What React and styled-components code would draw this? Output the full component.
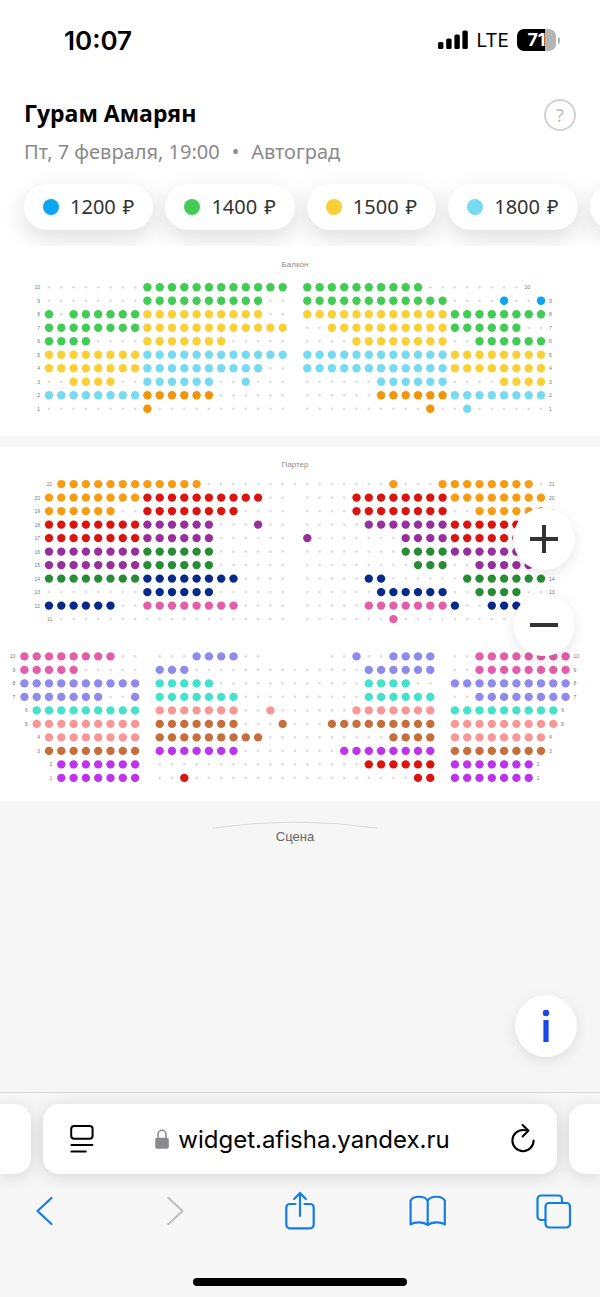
import React, { useState } from 'react';
import styled, { createGlobalStyle } from 'styled-components'

const COLORS = {
  b: '#0ba5f2',
  g: '#43cc55',
  y: '#f9d038',
  c: '#76dbf0',
  o: '#f39509',
  O: '#f89c14',
  r: '#dc1410',
  p: '#97309c',
  G: '#288c35',
  n: '#06298a',
  k: '#e35da8',
  l: '#8f8aeb',
  t: '#43e2cb',
  s: '#f99696',
  w: '#c66f3d',
  v: '#bd33ee',
}

const PRICES = [
  { price: 1200, color: COLORS.b },
  { price: 1400, color: COLORS.g },
  { price: 1500, color: COLORS.y },
  { price: 1800, color: COLORS.c },
  { price: 2000, color: COLORS.o },
]

// Each run is a count and a kind: a colour key, "." for a sold seat, "_" for an aisle
const BALCONY = [
  { row: 10, start: 2, seats: '8. 12g 1_ 10g 8.' },
  { row: 9, start: 2, seats: '8. 10g 2. 1_ 12g 4. 1b 2. 1b' },
  { row: 8, start: 2, seats: '1g 1. 6g 10y 2. 1_ 12y 8g' },
  { row: 7, start: 2, seats: '8g 12y 1_ 2. 10y 6g 2.' },
  { row: 6, start: 2, seats: '4g 4. 7y 5. 1_ 4. 8y 2. 6g' },
  { row: 5, start: 2, seats: '8y 12c 1_ 12c 8y' },
  { row: 4, start: 2, seats: '8y 10c 2. 1_ 12c 8y' },
  { row: 3, start: 2, seats: '2. 4y 2. 6c 2. 1c 3. 1_ 6. 6c 4. 4y' },
  { row: 2, start: 2, seats: '8c 6o 6. 1_ 6. 6o 8c' },
  { row: 1, start: 2, seats: '8. 1o 11. 1_ 10. 1o 2. 1c 6.' },
]

const PARTERRE_BACK = [
  { row: 21, start: 3, seats: '12O 15. 1O 3. 8O 1.' },
  { row: 20, start: 2, seats: '8O 10r 2. 1_ 4. 8r 8O' },
  { row: 19, start: 2, seats: '6O 2. 8r 4. 1_ 4. 8r 2. 6O' },
  { row: 18, start: 2, seats: '8r 6p 3. 1p 2. 1_ 5. 7p 8r' },
  { row: 17, start: 2, seats: '8r 6p 6. 1_ 1p 7. 4p 8r' },
  { row: 16, start: 2, seats: '8p 6G 6. 1_ 8. 4G 8p' },
  { row: 15, start: 2, seats: '8p 6G 6. 1_ 9. 3G 2. 6p' },
  { row: 14, start: 2, seats: '8G 8n 4. 1_ 5. 2n 5. 1. 7G' },
  { row: 13, start: 2, seats: '8. 6n 6. 1_ 6. 6n 2. 4G 2.' },
  { row: 12, start: 2, seats: '6n 2. 8k 4. 1_ 5. 7k 1n 2. 3n 2.' },
  { row: 11, start: 3, seats: '19. 1_ 7. 1k 11.' },
]

const PARTERRE_FRONT = [
  { row: 10, start: 0, seats: '8k 2. 1_ 3. 4l 2. 5_ 2. 1l 2. 4l 1_ 2. 8k' },
  { row: 9, start: 0, seats: '5k 5. 1_ 3l 14. 6l 1_ 2. 8k' },
  { row: 8, start: 0, seats: '10l 1_ 5t 12. 4t 2. 1_ 10l' },
  { row: 7, start: 0, seats: '7l 2. 1l 1_ 7t 10. 6t 1_ 2. 8l' },
  { row: 6, start: 1, seats: '9t 1_ 7s 2. 1s 6. 7s 1_ 9t' },
  { row: 5, start: 1, seats: '9s 1_ 7w 3. 1w 3. 9w 1_ 9s' },
  { row: 4, start: 2, seats: '8s 1_ 9w 10. 4w 1_ 8s' },
  { row: 3, start: 2, seats: '8w 1_ 7v 8. 8v 1_ 8w' },
  { row: 2, start: 3, seats: '7v 1_ 17. 6r 1_ 7v' },
  { row: 1, start: 3, seats: '7v 1_ 2. 1r 18. 2r 1_ 7v' },
]

const SEAT_X = 24.4
const STEP_X = 12.3
const STEP_Y = 13.5

const expand = (seats) => seats
  .split(' ')
  .map((run) => run.slice(-1).repeat(parseInt(run)))
  .join('')

const Seats = ({ rows, top }) => (
  <g>
    {rows.map(({ row, start, seats }, index) => {
      const y = top + index * STEP_Y
      const line = expand(seats)
      const first = SEAT_X + start * STEP_X
      const last = first + (line.length - 1) * STEP_X
      return (
        <g key={row}>
          <RowLabel x={first - 9} y={y + 2} textAnchor="end">{row}</RowLabel>
          {line.split('').map((kind, i) => {
            const x = first + i * STEP_X
            if (kind === '_') return null
            if (kind === '.') return <circle key={i} cx={x} cy={y} r="1.4" fill="#dedee0" />
            return <circle key={i} cx={x} cy={y} r="4.2" fill={COLORS[kind]} />
          })}
          <RowLabel x={last + 8} y={y + 2}>{row}</RowLabel>
        </g>
      )
    })}
  </g>
)

const StatusIcons = () => (
  <StatusRight>
    <svg width="30" height="20" viewBox="0 0 30 20">
      <rect x="0" y="12" width="5.4" height="7" rx="1.6" />
      <rect x="8.2" y="8.4" width="5.4" height="10.6" rx="1.6" />
      <rect x="16.4" y="4.4" width="5.4" height="14.6" rx="1.6" />
      <rect x="24.4" y="0.4" width="5.4" height="18.6" rx="1.6" />
    </svg>
    <Network>LTE</Network>
    <Battery>
      <BatteryBody>71</BatteryBody>
      <BatteryCap />
    </Battery>
  </StatusRight>
)

const App = () => {
  const [selected, setSelected] = useState(null)
  const [zoom, setZoom] = useState(1)

  return (
    <>
      <GlobalStyle />
      <Page>
        <StatusBar>
          <Time>10:07</Time>
          <StatusIcons />
        </StatusBar>

        <Header>
          <div>
            <Title>Гурам Амарян</Title>
            <Subtitle>
              <span>Пт, 7 февраля, 19:00</span>
              <span>•</span>
              <span>Автоград</span>
            </Subtitle>
          </div>
          <HelpButton aria-label="Помощь">?</HelpButton>
        </Header>

        <Prices>
          {PRICES.map(({ price, color }) => (
            <PriceChip
              key={price}
              aria-pressed={selected === price}
              onClick={() => setSelected(selected === price ? null : price)}
            >
              <Dot $color={color} />
              <Price>
                <span>{price}</span>
                <span>₽</span>
              </Price>
            </PriceChip>
          ))}
        </Prices>

        <Hall>
          <Sector>
            <Plan viewBox="0 0 600 190" $zoom={zoom}>
              <SectorName x="295" y="21">Балкон</SectorName>
              <Seats rows={BALCONY} top={41.3} />
            </Plan>
          </Sector>
          <Sector>
            <Plan viewBox="0 0 600 354" $zoom={zoom}>
              <SectorName x="295" y="20">Партер</SectorName>
              <Seats rows={PARTERRE_BACK} top={37.1} />
              <Seats rows={PARTERRE_FRONT} top={209.4} />
            </Plan>
          </Sector>
          <ZoomControls>
            <RoundButton aria-label="Приблизить" onClick={() => setZoom(Math.min(zoom + 0.5, 3))}>
              <svg width="28" height="28" viewBox="0 0 28 28" stroke="#333" strokeWidth="4">
                <path d="M0 14h28M14 0v28" />
              </svg>
            </RoundButton>
            <RoundButton aria-label="Отдалить" onClick={() => setZoom(Math.max(zoom - 0.5, 1))}>
              <svg width="28" height="28" viewBox="0 0 28 28" stroke="#333" strokeWidth="4">
                <path d="M0 14h28" />
              </svg>
            </RoundButton>
          </ZoomControls>
        </Hall>

        <StageArea>
          <StageArc viewBox="0 0 168 8">
            <path d="M0.5 7.2Q84 -5 167.5 7.2" fill="none" stroke="#d9d9d9" />
          </StageArc>
          <StageName>Сцена</StageName>
          <InfoButton aria-label="Информация">
            <svg width="10" height="34" viewBox="0 0 10 34" fill="#1848e8">
              <circle cx="5" cy="4" r="3.2" />
              <rect x="2.4" y="11" width="5.2" height="22" />
            </svg>
          </InfoButton>
        </StageArea>

        <Browser>
          <Tabs>
            <SideTab $side="left" />
            <AddressBar>
              <IconButton aria-label="Настройки страницы">
                <svg width="24" height="30" viewBox="0 0 24 30" fill="none" stroke="#000" strokeWidth="2" strokeLinecap="round">
                  <rect x="1.2" y="2" width="21.4" height="12.8" rx="3" />
                  <path d="M1.4 20.9h21M1.4 27.6h14.4" />
                </svg>
              </IconButton>
              <Address href="#">
                <svg width="14" height="20" viewBox="0 0 14 20">
                  <path d="M3 9.500V5.300a4 4 0 0 1 8 0v4.200" fill="none" stroke="#8a8a8e" strokeWidth="1.6" />
                  <rect x="0.2" y="8.800" width="13.600" height="11" rx="2" fill="#8a8a8e" />
                </svg>
                widget.afisha.yandex.ru
              </Address>
              <IconButton aria-label="Обновить">
                <svg width="24" height="32" viewBox="0 0 24 32" fill="none" stroke="#000" strokeWidth="2.1" strokeLinecap="round" strokeLinejoin="round">
                  <path d="M17 7.800Q14.500 7 12 7A10.600 10.600 0 1 0 22.600 17.600" />
                  <path d="M11.600 2l5.800 5.800-5.800 5.600" />
                </svg>
              </IconButton>
            </AddressBar>
            <SideTab $side="right" />
          </Tabs>
          <Toolbar>
            <ToolButton aria-label="Назад">
              <svg width="38" height="40" viewBox="0 0 38 40">
                <path d="M25.500 7L11.500 20l14 13" />
              </svg>
            </ToolButton>
            <ToolButton aria-label="Вперёд" disabled>
              <svg width="38" height="40" viewBox="0 0 38 40">
                <path d="M14.500 7l14 13-14 13" />
              </svg>
            </ToolButton>
            <ToolButton aria-label="Поделиться">
              <svg width="38" height="40" viewBox="0 0 38 40">
                <path d="M14.500 13H8.800a3.500 3.500 0 0 0-3.500 3.500v17.300a3.500 3.500 0 0 0 3.500 3.500h20.400a3.500 3.500 0 0 0 3.500-3.500V16.500a3.500 3.500 0 0 0-3.500-3.500h-5.700" />
                <path d="M19 25V2M13.200 8l5.800-6 5.800 6" />
              </svg>
            </ToolButton>
            <ToolButton aria-label="Закладки">
              <svg width="38" height="40" viewBox="0 0 38 40">
                <path d="M18.700 9.500C15.500 4.500 4.500 4.500 1.600 9.500V33.500C5.500 30.500 14.500 30.500 18.700 34c4.200-3.500 13.200-3.500 17.100-.5V9.500C32.900 4.500 21.900 4.500 18.700 9.500z" />
                <path d="M18.700 9.500V34" />
              </svg>
            </ToolButton>
            <ToolButton aria-label="Вкладки">
              <svg width="38" height="40" viewBox="0 0 38 40">
                <rect x="9.500" y="12" width="24.500" height="24.500" rx="3.500" />
                <path d="M9.500 29H5a3.500 3.500 0 0 1-3.500-3.500V8A3.500 3.500 0 0 1 5 4.500h17.500A3.500 3.500 0 0 1 26 8v4" />
              </svg>
            </ToolButton>
          </Toolbar>
          <HomeIndicator />
        </Browser>
      </Page>
    </>
  )
}

const GlobalStyle = createGlobalStyle`
  * {
    box-sizing: border-box;
  }

  body {
    margin: 0;
    background: #f6f6f6;
    font-family: "Noto Sans", sans-serif;
  }

  button {
    font-family: inherit;
    border: none;
    padding: 0;
    cursor: pointer;
  }

  svg {
    display: block;
    flex-shrink: 0;
  }
`

const Page = styled.div`
  display: flex;
  flex-direction: column;
  min-height: 100vh;
  overflow: hidden;
`

const StatusBar = styled.div`
  display: flex;
  align-items: center;
  justify-content: space-between;
  height: 80px;
  padding: 0 40px 0 64px;
  background: #fff;
`

const Time = styled.div`
  font-family: Inter, sans-serif;
  font-size: 26px;
  font-weight: 600;
`

const StatusRight = styled.div`
  display: flex;
  align-items: center;
  gap: 8px;
`

const Network = styled.span`
  font-family: Inter, sans-serif;
  font-size: 19px;
`

const Battery = styled.div`
  display: flex;
  align-items: center;
  gap: 2px;
`

const BatteryBody = styled.div`
  width: 39px;
  height: 22px;
  border-radius: 7px;
  background: linear-gradient(to right, #000 71%, #b5b5b5 71%);
  color: #fff;
  font-family: Inter, sans-serif;
  font-size: 18px;
  font-weight: 700;
  line-height: 22px;
  text-align: center;
`

const BatteryCap = styled.div`
  width: 2px;
  height: 7px;
  border-radius: 0 2px 2px 0;
  background: #b5b5b5;
`

const Header = styled.header`
  display: flex;
  align-items: flex-start;
  justify-content: space-between;
  padding: 15px 24px 0;
  background: #fff;
`

const Title = styled.h1`
  margin: 0;
  font-family: "Open Sans", sans-serif;
  font-size: 23px;
  font-weight: 700;
  line-height: 36px;
`

const Subtitle = styled.div`
  display: flex;
  gap: 12px;
  padding-top: 5px;
  font-size: 20px;
  line-height: 32px;
  color: #8a8a8a;
`

const HelpButton = styled.button`
  width: 32px;
  height: 32px;
  margin-top: 4px;
  border: 2px solid #d2d2d2;
  border-radius: 50%;
  background: #fff;
  color: #bdbdbd;
  font-size: 18px;
  line-height: 28px;
`

const Prices = styled.div`
  display: flex;
  gap: 12px;
  padding: 16px 24px;
  overflow: hidden;
  background: #fff;
`

const PriceChip = styled.button`
  display: flex;
  flex-shrink: 0;
  align-items: center;
  gap: 11px;
  height: 46px;
  padding: 0 19px;
  border-radius: 23px;
  background: #fff;
  box-shadow: 0 8px 24px rgba(0, 0, 0, 0.14);
  color: #333;
  font-size: 20px;
  line-height: 24px;
`

const Price = styled.span`
  display: flex;
  gap: 7px;
`

const Dot = styled.span`
  width: 16px;
  height: 16px;
  border-radius: 50%;
  background: ${(props) => props.$color};
`

const Hall = styled.main`
  position: relative;
  display: flex;
  flex-direction: column;
  gap: 11px;
`

const Sector = styled.section`
  background: #fff;
  overflow: hidden;
`

const Plan = styled.svg`
  width: 100%;
  height: auto;
  transform: scale(${(props) => props.$zoom});
`

const SectorName = styled.text`
  font-family: "Liberation Sans", Arial, sans-serif;
  font-size: 8px;
  fill: #8c8c8c;
  text-anchor: middle;
`

const RowLabel = styled.text`
  font-family: "Liberation Sans", Arial, sans-serif;
  font-size: 5px;
  fill: #777;
`

const ZoomControls = styled.div`
  position: absolute;
  top: 262px;
  right: 25px;
  display: flex;
  flex-direction: column;
  gap: 24px;
`

const RoundButton = styled.button`
  display: flex;
  align-items: center;
  justify-content: center;
  width: 62px;
  height: 62px;
  border-radius: 50%;
  background: #fff;
  box-shadow: 0 4px 14px rgba(0, 0, 0, 0.1);
`

const StageArea = styled.section`
  display: flex;
  flex: 1;
  flex-direction: column;
  align-items: center;
  padding: 20px 23px 35px;
`

const StageArc = styled.svg`
  width: 30%;
  margin-right: 10px;
`

const StageName = styled.div`
  margin-right: 10px;
  font-family: "Liberation Sans", Arial, sans-serif;
  font-size: 13px;
  line-height: 16px;
  color: #666;
`

const InfoButton = styled(RoundButton)`
  align-self: flex-end;
  margin-top: auto;
`

const Browser = styled.footer`
  border-top: 1px solid #d4d4d6;
  background: #f7f7f7;
`

const Tabs = styled.div`
  display: flex;
  gap: 12px;
  padding: 11px 0 16px;
  overflow: hidden;
`

const SideTab = styled.div`
  width: 31px;
  border-radius: ${(props) => (props.$side === 'left' ? '0 16px 16px 0' : '16px 0 0 16px')};
  background: #fff;
  box-shadow: 0 3px 18px rgba(0, 0, 0, 0.14);
`

const AddressBar = styled.div`
  display: flex;
  flex: 1;
  align-items: center;
  justify-content: space-between;
  height: 70px;
  padding: 0 22px 0 27px;
  border-radius: 16px;
  background: #fff;
  box-shadow: 0 3px 18px rgba(0, 0, 0, 0.14);
`

const IconButton = styled.button`
  background: none;
`

const Address = styled.a`
  display: flex;
  align-items: center;
  gap: 9px;
  color: #000;
  font-family: Inter, sans-serif;
  font-size: 24px;
  text-decoration: none;
`

const Toolbar = styled.nav`
  display: flex;
  justify-content: space-between;
  padding: 1px 26px 0;
`

const ToolButton = styled.button`
  background: none;

  svg {
    fill: none;
    stroke: ${(props) => (props.disabled ? '#bfbfc1' : '#127de8')};
    stroke-width: 2.2;
    stroke-linecap: round;
    stroke-linejoin: round;
  }
`

const HomeIndicator = styled.div`
  width: 214px;
  height: 8px;
  margin: 47px auto 11px;
  border-radius: 4px;
  background: #000;
`

export default App;
